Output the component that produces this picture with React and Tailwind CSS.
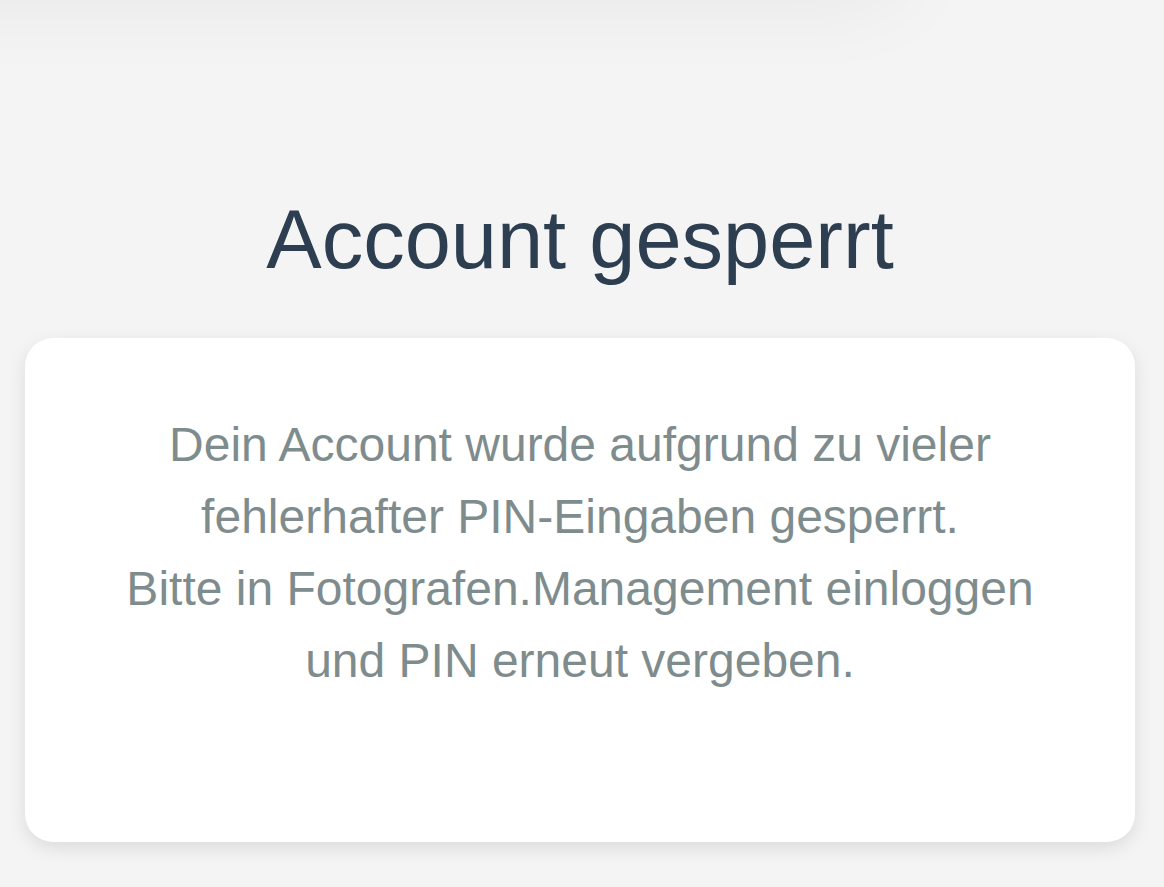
import React from 'react';

const App = () => {
  return (
    <div
      className="relative min-h-[887px] overflow-hidden bg-[#f4f4f4] pt-[198px]"
      style={{ fontFamily: '"Liberation Sans", Arial, sans-serif' }}
    >
      {/* header shadow from above the viewport */}
      <div className="absolute -top-[90px] -left-[120px] h-[90px] w-[1030px] rounded-[70px] bg-[#f4f4f4] shadow-[0_0_90px_rgba(0,0,0,0.06)]" />

      <div className="ml-[25px] mr-[29px]">
        <h1 className="text-center text-[83px] leading-none text-[#2c3e50]">
          Account gesperrt
        </h1>

        <div className="mt-[57px] h-[504px] rounded-[28px] bg-white px-12 pt-[71px] shadow-[0_6px_18px_rgba(0,0,0,0.1)]">
          <div className="mx-auto max-w-[960px] text-center text-[48px] leading-[72px] text-[#7f8c8d]">
            <p>Dein Account wurde aufgrund zu vieler fehlerhafter PIN-Eingaben gesperrt.</p>
            <p>Bitte in Fotografen.Management einloggen und PIN erneut vergeben.</p>
          </div>
        </div>
      </div>
    </div>
  );
};

export default App;
